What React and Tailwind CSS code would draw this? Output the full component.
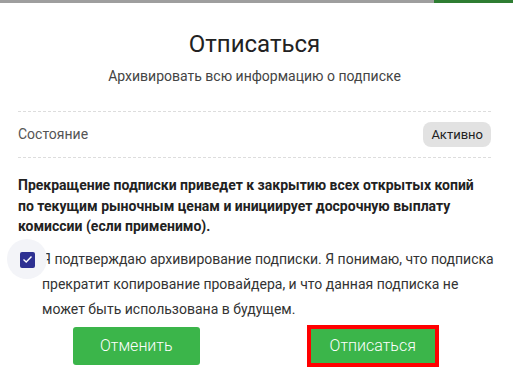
import React, { useState } from 'react';

const App = () => {
    const [checked, setChecked] = useState(true);

    return (
        <div className="w-[513px] h-[387px] bg-white overflow-hidden" style={{ fontFamily: 'Roboto, "Noto Sans", sans-serif' }}>
            <div className="flex h-[3px]">
                <div className="w-[434px] bg-[#9e9e9e]" />
                <div className="flex-1 bg-[#2e7d32]" />
            </div>
            <div className="pl-[18px] pr-[22px]">
                <h2 className="mt-[27px] text-center text-[24px] leading-[28px] text-[#222]">Отписаться</h2>
                <p className="mt-[8px] text-center text-[14px] leading-[20px] text-[#444]">
                    Архивировать всю информацию о подписке
                </p>
                <div className="mt-[25px] border-t border-dashed border-[#ddd]" />
                <div className="flex items-center justify-between py-[10px]">
                    <span className="text-[14px] text-[#555]">Состояние</span>
                    <span className="h-[25px] px-[8px] flex items-center rounded-[8px] bg-[#e2e2e2] text-[13px] text-[#222]">
                        Активно
                    </span>
                </div>
                <div className="border-t border-dashed border-[#ddd]" />
                <p className="mt-[17px] mr-[6px] text-[14px] leading-[20.5px] font-bold text-[#222]">
                    Прекращение подписки приведет к закрытию всех открытых копий по текущим рыночным ценам и инициирует досрочную выплату комиссии (если применимо).
                </p>
                <div className="mt-[10px] mr-[-12px] flex">
                    <div className="relative w-[24px] shrink-0 h-[25px]">
                        <div className="absolute left-[-11px] top-[-8px] w-[40px] h-[40px] rounded-full bg-[#f3f4f8]" />
                        <button
                            onClick={() => setChecked(!checked)}
                            className="absolute left-[2px] top-[5px] w-[15px] h-[16px] rounded-[2px] bg-[#2e3192] flex items-center justify-center"
                        >
                            {checked && (
                                <svg width="11" height="9" viewBox="0 0 11 9" fill="none">
                                    <path d="M1.5 4.5 L4.2 7 L9.5 1.5" stroke="white" strokeWidth="1.4" />
                                </svg>
                            )}
                        </button>
                    </div>
                    <p className="text-[14px] leading-[25px] text-[#333]">
                        Я подтверждаю архивирование подписки. Я понимаю, что подписка прекратит копирование провайдера, и что данная подписка не может быть использована в будущем.
                    </p>
                </div>
                <div className="mt-[5px] grid grid-cols-2">
                    <div className="flex justify-center">
                        <button className="w-[127px] h-[38px] rounded-[3px] bg-[#3bb54a] text-white font-light text-[16px]">
                            Отменить
                        </button>
                    </div>
                    <div className="flex justify-center">
                        <button className="w-[132px] h-[42px] -mt-[2px] border-[4px] border-[#ff0000] bg-[#3bb54a] text-white font-light text-[16px]">
                            Отписаться
                        </button>
                    </div>
                </div>
            </div>
        </div>
    );
};

export default App;
